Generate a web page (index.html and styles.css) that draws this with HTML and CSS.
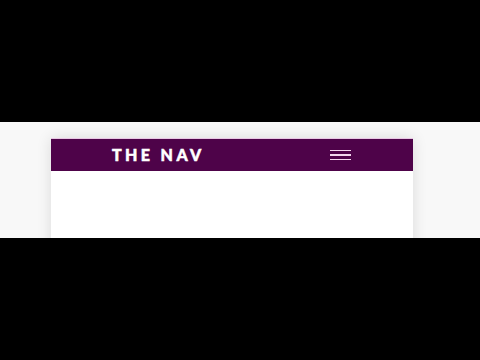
FILE: index.html
```html
<!DOCTYPE html>
<html lang="en">
<head>
<meta charset="utf-8">
<title>The Nav</title>
<link rel="stylesheet" href="styles.css">
</head>
<body>
<main class="screen">
  <section class="stage">
    <div class="card">
      <header class="nav">
        <span class="brand">THE NAV</span>
        <button class="burger" aria-label="Menu">
          <span class="bar"></span>
          <span class="bar"></span>
          <span class="bar"></span>
        </button>
      </header>
      <div class="card-body"></div>
    </div>
  </section>
</main>
</body>
</html>
```
FILE: styles.css
```css
html, body {
  margin: 0;
  padding: 0;
  background: #000;
}
.screen {
  width: 480px;
  height: 360px;
  padding-top: 122px;
  box-sizing: border-box;
}
.stage {
  height: 116px;
  background: #f8f8f8;
  overflow: hidden;
  padding: 16px 0 0 51px;
  box-sizing: border-box;
}
.card {
  width: 362px;
  height: 220px;
  background: #fff;
  box-shadow: 0 0 14px rgba(0, 0, 0, 0.12);
}
.nav {
  height: 33px;
  background: #4e0349;
  border-top: 1px solid #e9c7e4;
  box-sizing: border-box;
  display: flex;
  align-items: center;
  justify-content: space-between;
  padding: 0 62px 0 61px;
}
.brand {
  font-family: Lato, "Liberation Sans", sans-serif;
  font-weight: 900;
  font-size: 16px;
  letter-spacing: 3.4px;
  color: #fff;
  -webkit-text-stroke: 0.5px #fff;
  line-height: 1;
}
.burger {
  width: 21px;
  padding: 0;
  margin: 0;
  border: 0;
  background: none;
  display: flex;
  flex-direction: column;
  gap: 3px;
}
.bar {
  display: block;
  height: 1.5px;
  background: #f3d6ee;
}
```
